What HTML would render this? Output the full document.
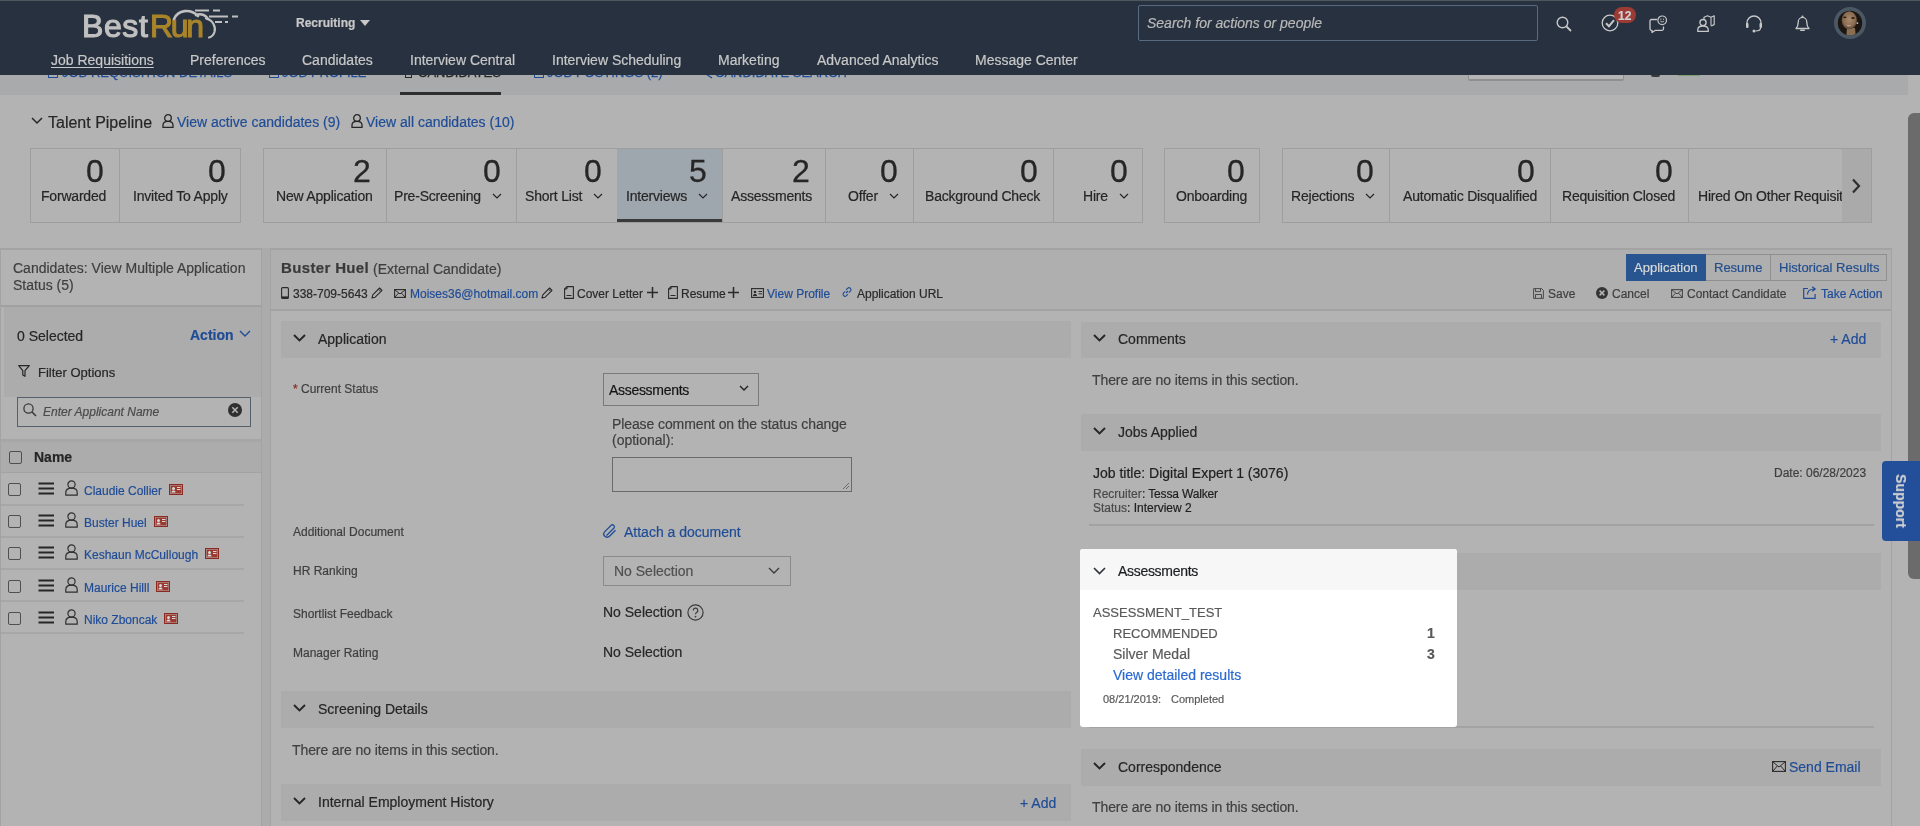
<!DOCTYPE html>
<html><head><meta charset="utf-8"><title>Recruiting</title>
<style>
html,body{margin:0;padding:0;}
body{width:1920px;height:826px;overflow:hidden;position:relative;background:#b3b3b3;font-family:"Liberation Sans",sans-serif;}
.t{position:absolute;white-space:nowrap;line-height:1;will-change:transform;-webkit-text-stroke:0.2px currentColor;}
.r{position:absolute;box-sizing:border-box;}
.i{position:absolute;overflow:visible;}
</style></head><body>
<div class="r" style="left:0px;top:75px;width:1908px;height:20px;background:#a9aaab"></div><div class="t" style="left:62px;top:66.00px;font-size:13px;color:#1f4c96;font-weight:400;font-style:normal;-webkit-text-stroke:0.25px #1f4c96">JOB REQUISITION DETAILS</div><div class="r" style="left:48px;top:70px;width:10px;height:8px;border:1px solid #1f4c96;border-top:none"></div><div class="t" style="left:282px;top:66.00px;font-size:13px;color:#1f4c96;font-weight:400;font-style:normal;-webkit-text-stroke:0.25px #1f4c96">JOB PROFILE</div><div class="r" style="left:269px;top:70px;width:10px;height:8px;border:1px solid #1f4c96;border-top:none"></div><div class="t" style="left:418px;top:66.00px;font-size:13px;color:#262626;font-weight:400;font-style:normal;-webkit-text-stroke:0.25px #262626">CANDIDATES</div><div class="r" style="left:405px;top:70px;width:7px;height:8px;border:1px solid #262626;border-top:none"></div><div class="t" style="left:547px;top:66.00px;font-size:13px;color:#1f4c96;font-weight:400;font-style:normal;-webkit-text-stroke:0.25px #1f4c96">JOB POSTINGS (2)</div><div class="r" style="left:534px;top:70px;width:10px;height:8px;border:1px solid #1f4c96;border-top:none"></div><div class="t" style="left:715px;top:66.00px;font-size:13px;color:#1f4c96;font-weight:400;font-style:normal;-webkit-text-stroke:0.25px #1f4c96">CANDIDATE SEARCH</div><svg class="i" style="left:705px;top:74px;" width="8" height="5" viewBox="0 0 8 5"><path d="M1 0l6 4" stroke="#1f4c96" stroke-width="1.3"/></svg><div class="r" style="left:400px;top:92px;width:101px;height:2.5px;background:#2e2e2e"></div><div class="r" style="left:1468px;top:74px;width:156px;height:7px;border:1px solid #8f8f8f;border-bottom-width:2px;border-top:none;border-radius:0 0 2px 2px;background:#b5b5b5"></div><div class="r" style="left:1651px;top:75px;width:9px;height:2px;background:#3a3a3a;border-radius:0 0 3px 3px"></div><div class="r" style="left:1678px;top:75px;width:22px;height:1px;background:#7fa070"></div><div class="r" style="left:0px;top:0px;width:1920px;height:75px;background:#27313f"></div><div class="r" style="left:0px;top:0px;width:1920px;height:1px;background:#4d575d"></div><div class="t" style="left:82px;top:9.91px;font-size:32px;color:#c0c0c0;font-weight:400;font-style:normal;-webkit-text-stroke:1.1px #c0c0c0;letter-spacing:0.6px">Best</div><div class="t" style="left:150px;top:9.91px;font-size:32px;color:#a8842a;font-weight:400;font-style:normal;-webkit-text-stroke:1.1px #a8842a;letter-spacing:-2.3px">Run</div><svg class="i" style="left:170px;top:5px;" width="72" height="36" viewBox="0 0 72 36"><path d="M4 14 C8 5 20 3 28 11" fill="none" stroke="#c0c0c0" stroke-width="2.6" stroke-linecap="round"/><path d="M26 10 C31 8 36 10 38 14" fill="none" stroke="#c0c0c0" stroke-width="2.6" stroke-linecap="round"/><path d="M36 13.5 C43 15 46 22 44.5 27 C43.5 30 41 32 39 32.5" fill="none" stroke="#c0c0c0" stroke-width="2.2" stroke-linecap="round"/><path d="M25 5.5h14M43 5.5h7M39 11.5h19M62 11.5h6M45 17h7M55 17h3" stroke="#c0c0c0" stroke-width="1.9"/></svg><div class="t" style="left:296px;top:16.84px;font-size:12px;color:#c8c8c8;font-weight:700;font-style:normal;">Recruiting</div><svg class="i" style="left:360px;top:20px;" width="10" height="6" viewBox="0 0 10 6"><path d="M0 0h10L5 6z" fill="#c8c8c8"/></svg><div class="t" style="left:51px;top:53.15px;font-size:14px;color:#c8c8c8;font-weight:400;font-style:normal;text-decoration:underline;text-underline-offset:2px">Job Requisitions</div><div class="t" style="left:190px;top:53.15px;font-size:14px;color:#c8c8c8;font-weight:400;font-style:normal;">Preferences</div><div class="t" style="left:302px;top:53.15px;font-size:14px;color:#c8c8c8;font-weight:400;font-style:normal;">Candidates</div><div class="t" style="left:410px;top:53.15px;font-size:14px;color:#c8c8c8;font-weight:400;font-style:normal;">Interview Central</div><div class="t" style="left:552px;top:53.15px;font-size:14px;color:#c8c8c8;font-weight:400;font-style:normal;">Interview Scheduling</div><div class="t" style="left:718px;top:53.15px;font-size:14px;color:#c8c8c8;font-weight:400;font-style:normal;">Marketing</div><div class="t" style="left:817px;top:53.15px;font-size:14px;color:#c8c8c8;font-weight:400;font-style:normal;">Advanced Analytics</div><div class="t" style="left:975px;top:53.15px;font-size:14px;color:#c8c8c8;font-weight:400;font-style:normal;">Message Center</div><div class="r" style="left:1138px;top:5px;width:400px;height:36px;border:1px solid #5a6a82;border-radius:2px"></div><div class="t" style="left:1147px;top:16.15px;font-size:14px;color:#b8b8b8;font-weight:400;font-style:italic;">Search for actions or people</div><svg class="i" style="left:1556px;top:16px;" width="16" height="16" viewBox="0 0 16 16"><circle cx="6.5" cy="6.5" r="5.3" fill="none" stroke="#c8c8c8" stroke-width="1.4"/><path d="M10.5 10.5L15 15" stroke="#c8c8c8" stroke-width="1.8"/></svg><svg class="i" style="left:1601px;top:14px;" width="18" height="18" viewBox="0 0 18 18"><circle cx="9" cy="9" r="7.8" fill="none" stroke="#c8c8c8" stroke-width="1.3"/><path d="M5 9.2l3 3 5-6" fill="none" stroke="#c8c8c8" stroke-width="2"/></svg><div class="r" style="left:1614px;top:7px;width:22px;height:16px;background:#9c3a34;border-radius:8px"></div><div class="t" style="left:1618px;top:9.84px;font-size:12px;color:#d0d3d5;font-weight:700;font-style:normal;">12</div><svg class="i" style="left:1649px;top:15px;" width="19" height="18" viewBox="0 0 19 18"><path d="M2.5 4.5h5.5M14.5 11.5v2.3c0 .9-.6 1.5-1.5 1.5H6.5L3 17.5v-2.2H2.5c-.9 0-1.5-.6-1.5-1.5V6c0-.9.6-1.5 1.5-1.5" fill="none" stroke="#c8c8c8" stroke-width="1.3" stroke-linejoin="round"/><circle cx="13.2" cy="5.3" r="4.3" fill="#27313f" stroke="#c8c8c8" stroke-width="1.2"/><path d="M11.3 6c.8 1.2 3 1.2 3.8 0" fill="none" stroke="#c8c8c8" stroke-width="1"/><circle cx="11.9" cy="4.2" r=".6" fill="#c8c8c8"/><circle cx="14.5" cy="4.2" r=".6" fill="#c8c8c8"/></svg><svg class="i" style="left:1697px;top:15px;" width="18" height="17" viewBox="0 0 18 17"><path d="M7 5.5V2.2l3.5-1.4 3.5 1.4 3.2-1.4v8.8L14 11" fill="none" stroke="#c8c8c8" stroke-width="1.2" stroke-linejoin="round"/><path d="M14 2.2v8.6" stroke="#c8c8c8" stroke-width="1.1"/><circle cx="6" cy="7.6" r="3.1" fill="#27313f" stroke="#c8c8c8" stroke-width="1.3"/><path d="M0.8 16.4v-1.8c0-2.4 2-3.6 5.2-3.6s5.2 1.2 5.2 3.6v1.8z" fill="#27313f" stroke="#c8c8c8" stroke-width="1.3"/></svg><svg class="i" style="left:1745px;top:15px;" width="18" height="17" viewBox="0 0 18 17"><path d="M2 11V8a7 7 0 0 1 14 0v3" fill="none" stroke="#c8c8c8" stroke-width="1.4"/><rect x="1" y="8" width="2.5" height="5" rx="1" fill="#c8c8c8"/><rect x="14.5" y="8" width="2.5" height="5" rx="1" fill="#c8c8c8"/><path d="M15.5 13c0 2-2 3-5 3" fill="none" stroke="#c8c8c8" stroke-width="1.2"/><circle cx="9" cy="16" r="1.5" fill="#c8c8c8"/></svg><svg class="i" style="left:1795px;top:15px;" width="15" height="17" viewBox="0 0 15 17"><path d="M1 13.5c1.8-1.6 2.2-3.6 2.2-6.3 0-2.6 1.9-4.8 4.3-4.8s4.3 2.2 4.3 4.8c0 2.7.4 4.7 2.2 6.3z" fill="none" stroke="#c8c8c8" stroke-width="1.3" stroke-linejoin="round"/><circle cx="7.5" cy="1.6" r="1" fill="#c8c8c8"/><path d="M5.8 15.3h3.4" stroke="#c8c8c8" stroke-width="1.6" stroke-linecap="round"/></svg><svg class="i" style="left:1834px;top:7px;" width="32" height="32" viewBox="0 0 32 32"><defs><clipPath id="av"><circle cx="16" cy="16" r="12.2"/></clipPath><radialGradient id="fc" cx="50%" cy="45%" r="55%"><stop offset="0" stop-color="#a88a6c"/><stop offset="0.7" stop-color="#8a6d52"/><stop offset="1" stop-color="#5a4534"/></radialGradient></defs><circle cx="16" cy="16" r="14" fill="none" stroke="#4b5864" stroke-width="4"/><g clip-path="url(#av)"><rect x="0" y="0" width="32" height="32" fill="#1c1612"/><path d="M12 32 L13 21 L21 21 L22 32z" fill="#8a6e52"/><ellipse cx="15.3" cy="13.3" rx="7.6" ry="9" fill="url(#fc)"/><ellipse cx="10.8" cy="10.3" rx="1.7" ry=".9" fill="#2a2018"/><ellipse cx="19" cy="11" rx="1.7" ry=".9" fill="#2a2018"/><path d="M12 17.3 Q14.8 19.8 17.6 17.5 Q14.8 21 12 17.3z" fill="#d8d0c8"/><circle cx="23.4" cy="16.1" r=".9" fill="#d0d0d0"/></g></svg><svg class="i" style="left:31px;top:117px;" width="12" height="8" viewBox="0 0 12 8"><path d="M1 1l5 5 5-5" fill="none" stroke="#262626" stroke-width="1.5"/></svg><div class="t" style="left:48px;top:115.46px;font-size:16px;color:#262626;font-weight:400;font-style:normal;">Talent Pipeline</div><svg class="i" style="left:162px;top:114px;" width="12" height="14" viewBox="0 0 12 14"><circle cx="6" cy="4" r="3.3" fill="none" stroke="#262626" stroke-width="1.3"/><path d="M1 13.3v-2.3c0-2.5 2.2-3.6 5-3.6s5 1.1 5 3.6v2.3z" fill="none" stroke="#262626" stroke-width="1.3"/></svg><div class="t" style="left:177px;top:115.15px;font-size:14px;color:#1f4c96;font-weight:400;font-style:normal;">View active candidates (9)</div><svg class="i" style="left:351px;top:114px;" width="12" height="14" viewBox="0 0 12 14"><circle cx="6" cy="4" r="3.3" fill="none" stroke="#262626" stroke-width="1.3"/><path d="M1 13.3v-2.3c0-2.5 2.2-3.6 5-3.6s5 1.1 5 3.6v2.3z" fill="none" stroke="#262626" stroke-width="1.3"/></svg><div class="t" style="left:366px;top:115.15px;font-size:14px;color:#1f4c96;font-weight:400;font-style:normal;">View all candidates (10)</div><div class="r" style="left:30px;top:148px;width:211px;height:75px;border:1px solid #9e9e9e"></div><div class="t" style="right:1816.5px;top:154.91px;font-size:32px;color:#262626;font-weight:400;font-style:normal;-webkit-text-stroke:0.3px #262626">0</div><div class="t" style="right:1814px;top:189.15px;font-size:14px;color:#262626;font-weight:400;font-style:normal;letter-spacing:-0.2px">Forwarded</div><div class="r" style="left:119px;top:149px;width:1px;height:73px;background:#9e9e9e"></div><div class="t" style="right:1694.5px;top:154.91px;font-size:32px;color:#262626;font-weight:400;font-style:normal;-webkit-text-stroke:0.3px #262626">0</div><div class="t" style="right:1692px;top:189.15px;font-size:14px;color:#262626;font-weight:400;font-style:normal;letter-spacing:-0.2px">Invited To Apply</div><div class="r" style="left:263px;top:148px;width:880px;height:75px;border:1px solid #9e9e9e"></div><div class="t" style="right:1549.5px;top:154.91px;font-size:32px;color:#262626;font-weight:400;font-style:normal;-webkit-text-stroke:0.3px #262626">2</div><div class="t" style="right:1547px;top:189.15px;font-size:14px;color:#262626;font-weight:400;font-style:normal;letter-spacing:-0.2px">New Application</div><div class="r" style="left:386px;top:149px;width:1px;height:73px;background:#9e9e9e"></div><div class="t" style="right:1419.5px;top:154.91px;font-size:32px;color:#262626;font-weight:400;font-style:normal;-webkit-text-stroke:0.3px #262626">0</div><svg class="i" style="left:492px;top:193px;" width="10" height="6" viewBox="0 0 10 6"><path d="M1 1l4 4 4-4" fill="none" stroke="#262626" stroke-width="1.2"/></svg><div class="t" style="right:1439px;top:189.15px;font-size:14px;color:#262626;font-weight:400;font-style:normal;letter-spacing:-0.2px">Pre-Screening</div><div class="r" style="left:516px;top:149px;width:1px;height:73px;background:#9e9e9e"></div><div class="t" style="right:1318.5px;top:154.91px;font-size:32px;color:#262626;font-weight:400;font-style:normal;-webkit-text-stroke:0.3px #262626">0</div><svg class="i" style="left:593px;top:193px;" width="10" height="6" viewBox="0 0 10 6"><path d="M1 1l4 4 4-4" fill="none" stroke="#262626" stroke-width="1.2"/></svg><div class="t" style="right:1338px;top:189.15px;font-size:14px;color:#262626;font-weight:400;font-style:normal;letter-spacing:-0.2px">Short List</div><div class="r" style="left:617px;top:149px;width:1px;height:73px;background:#9e9e9e"></div><div class="r" style="left:617px;top:149px;width:105px;height:73px;background:#9fa7ae"></div><div class="r" style="left:617px;top:219px;width:105px;height:3px;background:#3a3a3a"></div><div class="t" style="right:1213.5px;top:154.91px;font-size:32px;color:#262626;font-weight:400;font-style:normal;-webkit-text-stroke:0.3px #262626">5</div><svg class="i" style="left:698px;top:193px;" width="10" height="6" viewBox="0 0 10 6"><path d="M1 1l4 4 4-4" fill="none" stroke="#262626" stroke-width="1.2"/></svg><div class="t" style="right:1233px;top:189.15px;font-size:14px;color:#262626;font-weight:400;font-style:normal;letter-spacing:-0.2px">Interviews</div><div class="r" style="left:722px;top:149px;width:1px;height:73px;background:#9e9e9e"></div><div class="t" style="right:1110.5px;top:154.91px;font-size:32px;color:#262626;font-weight:400;font-style:normal;-webkit-text-stroke:0.3px #262626">2</div><div class="t" style="right:1108px;top:189.15px;font-size:14px;color:#262626;font-weight:400;font-style:normal;letter-spacing:-0.2px">Assessments</div><div class="r" style="left:825px;top:149px;width:1px;height:73px;background:#9e9e9e"></div><div class="t" style="right:1022.5px;top:154.91px;font-size:32px;color:#262626;font-weight:400;font-style:normal;-webkit-text-stroke:0.3px #262626">0</div><svg class="i" style="left:889px;top:193px;" width="10" height="6" viewBox="0 0 10 6"><path d="M1 1l4 4 4-4" fill="none" stroke="#262626" stroke-width="1.2"/></svg><div class="t" style="right:1042px;top:189.15px;font-size:14px;color:#262626;font-weight:400;font-style:normal;letter-spacing:-0.2px">Offer</div><div class="r" style="left:913px;top:149px;width:1px;height:73px;background:#9e9e9e"></div><div class="t" style="right:882.5px;top:154.91px;font-size:32px;color:#262626;font-weight:400;font-style:normal;-webkit-text-stroke:0.3px #262626">0</div><div class="t" style="right:880px;top:189.15px;font-size:14px;color:#262626;font-weight:400;font-style:normal;letter-spacing:-0.2px">Background Check</div><div class="r" style="left:1053px;top:149px;width:1px;height:73px;background:#9e9e9e"></div><div class="t" style="right:792.5px;top:154.91px;font-size:32px;color:#262626;font-weight:400;font-style:normal;-webkit-text-stroke:0.3px #262626">0</div><svg class="i" style="left:1119px;top:193px;" width="10" height="6" viewBox="0 0 10 6"><path d="M1 1l4 4 4-4" fill="none" stroke="#262626" stroke-width="1.2"/></svg><div class="t" style="right:812px;top:189.15px;font-size:14px;color:#262626;font-weight:400;font-style:normal;letter-spacing:-0.2px">Hire</div><div class="r" style="left:1164px;top:148px;width:96px;height:75px;border:1px solid #9e9e9e"></div><div class="t" style="right:675.5px;top:154.91px;font-size:32px;color:#262626;font-weight:400;font-style:normal;-webkit-text-stroke:0.3px #262626">0</div><div class="t" style="right:673px;top:189.15px;font-size:14px;color:#262626;font-weight:400;font-style:normal;letter-spacing:-0.2px">Onboarding</div><div class="r" style="left:1282px;top:148px;width:590px;height:75px;border:1px solid #9e9e9e"></div><div class="t" style="right:546.5px;top:154.91px;font-size:32px;color:#262626;font-weight:400;font-style:normal;-webkit-text-stroke:0.3px #262626">0</div><svg class="i" style="left:1365px;top:193px;" width="10" height="6" viewBox="0 0 10 6"><path d="M1 1l4 4 4-4" fill="none" stroke="#262626" stroke-width="1.2"/></svg><div class="t" style="right:566px;top:189.15px;font-size:14px;color:#262626;font-weight:400;font-style:normal;letter-spacing:-0.2px">Rejections</div><div class="r" style="left:1389px;top:149px;width:1px;height:73px;background:#9e9e9e"></div><div class="t" style="right:385.5px;top:154.91px;font-size:32px;color:#262626;font-weight:400;font-style:normal;-webkit-text-stroke:0.3px #262626">0</div><div class="t" style="right:383px;top:189.15px;font-size:14px;color:#262626;font-weight:400;font-style:normal;letter-spacing:-0.2px">Automatic Disqualified</div><div class="r" style="left:1550px;top:149px;width:1px;height:73px;background:#9e9e9e"></div><div class="t" style="right:247.5px;top:154.91px;font-size:32px;color:#262626;font-weight:400;font-style:normal;-webkit-text-stroke:0.3px #262626">0</div><div class="t" style="right:245px;top:189.15px;font-size:14px;color:#262626;font-weight:400;font-style:normal;letter-spacing:-0.2px">Requisition Closed</div><div class="r" style="left:1688px;top:149px;width:1px;height:73px;background:#9e9e9e"></div><div class="r" style="left:1689px;top:149px;width:153px;height:73px;overflow:hidden"><div class="t" style="left:9px;top:40.15px;font-size:14px;color:#262626;font-weight:400;font-style:normal;letter-spacing:-0.2px">Hired On Other Requisition</div></div><div class="r" style="left:1842px;top:149px;width:29px;height:73px;background:#aaaaaa"></div><svg class="i" style="left:1851px;top:178px;" width="10" height="16" viewBox="0 0 10 16"><path d="M2 1.5l6 6.5-6 6.5" fill="none" stroke="#2e2e2e" stroke-width="2.2"/></svg><div class="r" style="left:1908px;top:113px;width:12px;height:466px;background:#6b6b6b;border-radius:6px 0 0 6px"></div><div class="r" style="left:0px;top:248px;width:262px;height:578px;border-left:1px solid #a3a3a3;border-top:2px solid #a3a3a3;border-right:1px solid #a3a3a3"></div><div class="r" style="left:262px;top:248px;width:8px;height:578px;background:#ababab"></div><div class="t" style="left:13px;top:261.15px;font-size:14px;color:#3f3f3f;font-weight:400;font-style:normal;">Candidates: View Multiple Application</div><div class="t" style="left:13px;top:278.15px;font-size:14px;color:#3f3f3f;font-weight:400;font-style:normal;">Status (5)</div><div class="r" style="left:1px;top:305px;width:260px;height:2px;background:#a0a0a0"></div><div class="r" style="left:4px;top:307px;width:257px;height:90px;background:#acacac"></div><div class="t" style="left:17px;top:329.15px;font-size:14px;color:#262626;font-weight:400;font-style:normal;">0 Selected</div><div class="t" style="left:190px;top:328.15px;font-size:14px;color:#1f4c96;font-weight:700;font-style:normal;">Action</div><svg class="i" style="left:239px;top:330px;" width="12" height="8" viewBox="0 0 12 8"><path d="M1 1l5 5 5-5" fill="none" stroke="#1f4c96" stroke-width="1.4"/></svg><svg class="i" style="left:18px;top:365px;" width="12" height="12" viewBox="0 0 12 12"><path d="M0.7 0.7h10.6L7 5.7v5.6l-2.2-1.4V5.7z" fill="none" stroke="#262626" stroke-width="1.2" stroke-linejoin="round"/></svg><div class="t" style="left:38px;top:366.00px;font-size:13px;color:#262626;font-weight:400;font-style:normal;">Filter Options</div><div class="r" style="left:17px;top:397px;width:234px;height:30px;border:1px solid #56606c;background:#b3b3b3"></div><svg class="i" style="left:23px;top:403px;" width="14" height="14" viewBox="0 0 14 14"><circle cx="5.5" cy="5.5" r="4.6" fill="none" stroke="#3a3a3a" stroke-width="1.3"/><path d="M9 9l4 4" stroke="#3a3a3a" stroke-width="1.6"/></svg><div class="t" style="left:43px;top:405.84px;font-size:12px;color:#4a4a4a;font-weight:400;font-style:italic;">Enter Applicant Name</div><svg class="i" style="left:228px;top:403px;" width="14" height="14" viewBox="0 0 14 14"><circle cx="7" cy="7" r="7" fill="#2f2f2f"/><path d="M4.3 4.3l5.4 5.4M9.7 4.3l-5.4 5.4" stroke="#b3b3b3" stroke-width="1.6"/></svg><div class="r" style="left:1px;top:439px;width:260px;height:3px;background:#a6a6a6"></div><div class="r" style="left:1px;top:442px;width:260px;height:30px;background:#acacac"></div><div class="r" style="left:9px;top:451px;width:13px;height:13px;border:1px solid #4f4f4f;border-radius:2px"></div><div class="t" style="left:34px;top:450.15px;font-size:14px;color:#262626;font-weight:700;font-style:normal;">Name</div><div class="r" style="left:1px;top:472px;width:260px;height:1px;background:#a3a3a3"></div><div class="r" style="left:8px;top:483px;width:13px;height:13px;border:1px solid #4f4f4f;border-radius:2px"></div><svg class="i" style="left:38px;top:482px;" width="16" height="13" viewBox="0 0 16 13"><path d="M0.5 1.5h15.5M0.5 6.5h15.5M0.5 11.5h15.5" stroke="#262626" stroke-width="2.1"/></svg><svg class="i" style="left:65px;top:480px;" width="13" height="16" viewBox="0 0 13 16"><circle cx="6.5" cy="4.5" r="3.6" fill="none" stroke="#2f2f2f" stroke-width="1.2"/><path d="M0.8 15.2v-2.8c0-2.8 2.4-4.2 5.7-4.2s5.7 1.4 5.7 4.2v2.8z" fill="none" stroke="#2f2f2f" stroke-width="1.2"/></svg><div class="t" style="left:84px;top:484.84px;font-size:12px;color:#1f4c96;font-weight:400;font-style:normal;">Claudie Collier</div><svg class="i" style="left:169px;top:484px;" width="14" height="11" viewBox="0 0 14 11"><rect x="0.5" y="0.5" width="13" height="10" fill="none" stroke="#8b2a22" stroke-width="1"/><rect x="1.5" y="1.5" width="11" height="8" fill="#9b3a30"/><circle cx="4.5" cy="4.5" r="1.5" fill="#d8d8d8"/><path d="M2.5 8.5c0-1.5 1-2 2-2s2 .5 2 2z" fill="#d8d8d8"/><path d="M8 3.5h3.5M8 5.5h3.5" stroke="#d8d8d8" stroke-width="1"/></svg><div class="r" style="left:1px;top:504px;width:243px;height:2px;background:#a7a7a7"></div><div class="r" style="left:8px;top:515px;width:13px;height:13px;border:1px solid #4f4f4f;border-radius:2px"></div><svg class="i" style="left:38px;top:514px;" width="16" height="13" viewBox="0 0 16 13"><path d="M0.5 1.5h15.5M0.5 6.5h15.5M0.5 11.5h15.5" stroke="#262626" stroke-width="2.1"/></svg><svg class="i" style="left:65px;top:512px;" width="13" height="16" viewBox="0 0 13 16"><circle cx="6.5" cy="4.5" r="3.6" fill="none" stroke="#2f2f2f" stroke-width="1.2"/><path d="M0.8 15.2v-2.8c0-2.8 2.4-4.2 5.7-4.2s5.7 1.4 5.7 4.2v2.8z" fill="none" stroke="#2f2f2f" stroke-width="1.2"/></svg><div class="t" style="left:84px;top:516.84px;font-size:12px;color:#1f4c96;font-weight:400;font-style:normal;">Buster Huel</div><svg class="i" style="left:154px;top:516px;" width="14" height="11" viewBox="0 0 14 11"><rect x="0.5" y="0.5" width="13" height="10" fill="none" stroke="#8b2a22" stroke-width="1"/><rect x="1.5" y="1.5" width="11" height="8" fill="#9b3a30"/><circle cx="4.5" cy="4.5" r="1.5" fill="#d8d8d8"/><path d="M2.5 8.5c0-1.5 1-2 2-2s2 .5 2 2z" fill="#d8d8d8"/><path d="M8 3.5h3.5M8 5.5h3.5" stroke="#d8d8d8" stroke-width="1"/></svg><div class="r" style="left:1px;top:536px;width:243px;height:2px;background:#a7a7a7"></div><div class="r" style="left:8px;top:547px;width:13px;height:13px;border:1px solid #4f4f4f;border-radius:2px"></div><svg class="i" style="left:38px;top:546px;" width="16" height="13" viewBox="0 0 16 13"><path d="M0.5 1.5h15.5M0.5 6.5h15.5M0.5 11.5h15.5" stroke="#262626" stroke-width="2.1"/></svg><svg class="i" style="left:65px;top:544px;" width="13" height="16" viewBox="0 0 13 16"><circle cx="6.5" cy="4.5" r="3.6" fill="none" stroke="#2f2f2f" stroke-width="1.2"/><path d="M0.8 15.2v-2.8c0-2.8 2.4-4.2 5.7-4.2s5.7 1.4 5.7 4.2v2.8z" fill="none" stroke="#2f2f2f" stroke-width="1.2"/></svg><div class="t" style="left:84px;top:548.84px;font-size:12px;color:#1f4c96;font-weight:400;font-style:normal;">Keshaun McCullough</div><svg class="i" style="left:205px;top:548px;" width="14" height="11" viewBox="0 0 14 11"><rect x="0.5" y="0.5" width="13" height="10" fill="none" stroke="#8b2a22" stroke-width="1"/><rect x="1.5" y="1.5" width="11" height="8" fill="#9b3a30"/><circle cx="4.5" cy="4.5" r="1.5" fill="#d8d8d8"/><path d="M2.5 8.5c0-1.5 1-2 2-2s2 .5 2 2z" fill="#d8d8d8"/><path d="M8 3.5h3.5M8 5.5h3.5" stroke="#d8d8d8" stroke-width="1"/></svg><div class="r" style="left:1px;top:568px;width:243px;height:2px;background:#a7a7a7"></div><div class="r" style="left:8px;top:580px;width:13px;height:13px;border:1px solid #4f4f4f;border-radius:2px"></div><svg class="i" style="left:38px;top:579px;" width="16" height="13" viewBox="0 0 16 13"><path d="M0.5 1.5h15.5M0.5 6.5h15.5M0.5 11.5h15.5" stroke="#262626" stroke-width="2.1"/></svg><svg class="i" style="left:65px;top:577px;" width="13" height="16" viewBox="0 0 13 16"><circle cx="6.5" cy="4.5" r="3.6" fill="none" stroke="#2f2f2f" stroke-width="1.2"/><path d="M0.8 15.2v-2.8c0-2.8 2.4-4.2 5.7-4.2s5.7 1.4 5.7 4.2v2.8z" fill="none" stroke="#2f2f2f" stroke-width="1.2"/></svg><div class="t" style="left:84px;top:581.84px;font-size:12px;color:#1f4c96;font-weight:400;font-style:normal;">Maurice Hilll</div><svg class="i" style="left:156px;top:581px;" width="14" height="11" viewBox="0 0 14 11"><rect x="0.5" y="0.5" width="13" height="10" fill="none" stroke="#8b2a22" stroke-width="1"/><rect x="1.5" y="1.5" width="11" height="8" fill="#9b3a30"/><circle cx="4.5" cy="4.5" r="1.5" fill="#d8d8d8"/><path d="M2.5 8.5c0-1.5 1-2 2-2s2 .5 2 2z" fill="#d8d8d8"/><path d="M8 3.5h3.5M8 5.5h3.5" stroke="#d8d8d8" stroke-width="1"/></svg><div class="r" style="left:1px;top:600px;width:243px;height:2px;background:#a7a7a7"></div><div class="r" style="left:8px;top:612px;width:13px;height:13px;border:1px solid #4f4f4f;border-radius:2px"></div><svg class="i" style="left:38px;top:611px;" width="16" height="13" viewBox="0 0 16 13"><path d="M0.5 1.5h15.5M0.5 6.5h15.5M0.5 11.5h15.5" stroke="#262626" stroke-width="2.1"/></svg><svg class="i" style="left:65px;top:609px;" width="13" height="16" viewBox="0 0 13 16"><circle cx="6.5" cy="4.5" r="3.6" fill="none" stroke="#2f2f2f" stroke-width="1.2"/><path d="M0.8 15.2v-2.8c0-2.8 2.4-4.2 5.7-4.2s5.7 1.4 5.7 4.2v2.8z" fill="none" stroke="#2f2f2f" stroke-width="1.2"/></svg><div class="t" style="left:84px;top:613.84px;font-size:12px;color:#1f4c96;font-weight:400;font-style:normal;">Niko Zboncak</div><svg class="i" style="left:164px;top:613px;" width="14" height="11" viewBox="0 0 14 11"><rect x="0.5" y="0.5" width="13" height="10" fill="none" stroke="#8b2a22" stroke-width="1"/><rect x="1.5" y="1.5" width="11" height="8" fill="#9b3a30"/><circle cx="4.5" cy="4.5" r="1.5" fill="#d8d8d8"/><path d="M2.5 8.5c0-1.5 1-2 2-2s2 .5 2 2z" fill="#d8d8d8"/><path d="M8 3.5h3.5M8 5.5h3.5" stroke="#d8d8d8" stroke-width="1"/></svg><div class="r" style="left:1px;top:632px;width:243px;height:2px;background:#a7a7a7"></div><div class="r" style="left:270px;top:248px;width:1622px;height:578px;border-left:1px solid #a3a3a3;border-top:2px solid #a3a3a3;border-right:1px solid #a3a3a3"></div><div class="r" style="left:271px;top:250px;width:1620px;height:59px;background:#afafaf"></div><div class="r" style="left:271px;top:309px;width:1620px;height:2px;background:#a3a3a3"></div><div class="t" style="left:281px;top:260.30px;font-size:15px;color:#3a3a3a;font-weight:700;font-style:normal;letter-spacing:0.35px">Buster Huel</div><div class="t" style="left:373px;top:262.15px;font-size:14px;color:#3f3f3f;font-weight:400;font-style:normal;">(External Candidate)</div><svg class="i" style="left:281px;top:287px;" width="8" height="12" viewBox="0 0 8 12"><rect x="0.6" y="0.6" width="6.8" height="10.8" rx="1" fill="none" stroke="#2a2a2a" stroke-width="1.1"/><path d="M0.8 10.2h6.4" stroke="#2a2a2a" stroke-width="1.6"/></svg><div class="t" style="left:293px;top:287.84px;font-size:12px;color:#2a2a2a;font-weight:400;font-style:normal;">338-709-5643</div><svg class="i" style="left:371px;top:287px;" width="12" height="12" viewBox="0 0 12 12"><path d="M1 11l.8-3.2L8.6 1l2.4 2.4-6.8 6.8z" fill="none" stroke="#2a2a2a" stroke-width="1.1" stroke-linejoin="round"/><path d="M7.5 2.2l2.3 2.3" stroke="#2a2a2a" stroke-width="1"/></svg><svg class="i" style="left:394px;top:289px;" width="12" height="9" viewBox="0 0 12 9"><rect x="0.6" y="0.6" width="10.8" height="7.8" fill="none" stroke="#2a2a2a" stroke-width="1.1"/><path d="M0.8 0.8L6.0 4.95L11.2 0.8M0.8 8.2L4.5600000000000005 4.05M11.2 8.2L7.4399999999999995 4.05" fill="none" stroke="#2a2a2a" stroke-width="1"/></svg><div class="t" style="left:410px;top:287.84px;font-size:12px;color:#1f4c96;font-weight:400;font-style:normal;">Moises36@hotmail.com</div><svg class="i" style="left:541px;top:287px;" width="12" height="12" viewBox="0 0 12 12"><path d="M1 11l.8-3.2L8.6 1l2.4 2.4-6.8 6.8z" fill="none" stroke="#2a2a2a" stroke-width="1.1" stroke-linejoin="round"/><path d="M7.5 2.2l2.3 2.3" stroke="#2a2a2a" stroke-width="1"/></svg><svg class="i" style="left:564px;top:286px;" width="10" height="13" viewBox="0 0 10 13"><path d="M3 0.6h6.4v11.8H0.6V3z" fill="none" stroke="#2a2a2a" stroke-width="1.1" stroke-linejoin="round"/><path d="M3 0.6V3H0.6" fill="none" stroke="#2a2a2a" stroke-width="1"/><path d="M2.5 9.5h5" stroke="#2a2a2a" stroke-width="1"/></svg><div class="t" style="left:577px;top:287.84px;font-size:12px;color:#2a2a2a;font-weight:400;font-style:normal;">Cover Letter</div><svg class="i" style="left:647px;top:287px;" width="11" height="11" viewBox="0 0 11 11"><path d="M5.5 0v11M0 5.5h11" stroke="#2a2a2a" stroke-width="1.5"/></svg><svg class="i" style="left:668px;top:286px;" width="10" height="13" viewBox="0 0 10 13"><path d="M3 0.6h6.4v11.8H0.6V3z" fill="none" stroke="#2a2a2a" stroke-width="1.1" stroke-linejoin="round"/><path d="M3 0.6V3H0.6" fill="none" stroke="#2a2a2a" stroke-width="1"/><path d="M2.5 9.5h5" stroke="#2a2a2a" stroke-width="1"/></svg><div class="t" style="left:681px;top:287.84px;font-size:12px;color:#2a2a2a;font-weight:400;font-style:normal;">Resume</div><svg class="i" style="left:728px;top:287px;" width="11" height="11" viewBox="0 0 11 11"><path d="M5.5 0v11M0 5.5h11" stroke="#2a2a2a" stroke-width="1.5"/></svg><svg class="i" style="left:751px;top:288px;" width="13" height="10" viewBox="0 0 13 10"><rect x="0.6" y="0.6" width="11.8" height="8.8" fill="none" stroke="#2a2a2a" stroke-width="1.1"/><circle cx="4" cy="4" r="1.3" fill="#2a2a2a"/><path d="M2 8c0-1.4.9-2 2-2s2 .6 2 2z" fill="#2a2a2a"/><path d="M7.5 3.5h3.5M7.5 5.8h3.5" stroke="#2a2a2a" stroke-width="1"/></svg><div class="t" style="left:767px;top:287.84px;font-size:12px;color:#1f4c96;font-weight:400;font-style:normal;">View Profile</div><svg class="i" style="left:841px;top:286px;" width="12" height="12" viewBox="0 0 12 12"><path d="M5 7l2-2M4.2 5.3L2.4 7.1a2 2 0 0 0 2.8 2.8L7 8.1M7.8 6.7l1.8-1.8A2 2 0 0 0 6.8 2.1L5 3.9" fill="none" stroke="#1f4c96" stroke-width="1.1"/></svg><div class="t" style="left:857px;top:287.84px;font-size:12px;color:#2a2a2a;font-weight:400;font-style:normal;">Application URL</div><div class="r" style="left:1626px;top:254px;width:80px;height:27px;background:#28558f;border:1px solid #28558f"></div><div class="t" style="left:1634px;top:261.00px;font-size:13px;color:#d9d9d9;font-weight:400;font-style:normal;">Application</div><div class="r" style="left:1706px;top:254px;width:181px;height:27px;border:1px solid #8f8f8f;border-left:none"></div><div class="r" style="left:1770px;top:254px;width:1px;height:27px;background:#8f8f8f"></div><div class="t" style="left:1714px;top:261.00px;font-size:13px;color:#234f8e;font-weight:400;font-style:normal;">Resume</div><div class="t" style="left:1779px;top:261.00px;font-size:13px;color:#234f8e;font-weight:400;font-style:normal;">Historical Results</div><svg class="i" style="left:1533px;top:288px;" width="11" height="11" viewBox="0 0 11 11"><path d="M0.6 0.6h8l1.8 1.8v8H0.6z" fill="none" stroke="#4a4a4a" stroke-width="1"/><path d="M2.5 0.6v3h5v-3M2.5 10.4V6.5h6v3.9" fill="none" stroke="#4a4a4a" stroke-width="1"/></svg><div class="t" style="left:1548px;top:288.34px;font-size:12px;color:#3f3f3f;font-weight:400;font-style:normal;">Save</div><svg class="i" style="left:1596px;top:287px;" width="12" height="12" viewBox="0 0 12 12"><circle cx="6" cy="6" r="6" fill="#353535"/><path d="M3.6 3.6l4.8 4.8M8.4 3.6l-4.8 4.8" stroke="#b3b3b3" stroke-width="1.5"/></svg><div class="t" style="left:1612px;top:288.34px;font-size:12px;color:#3f3f3f;font-weight:400;font-style:normal;">Cancel</div><svg class="i" style="left:1671px;top:289px;" width="12" height="9" viewBox="0 0 12 9"><rect x="0.6" y="0.6" width="10.8" height="7.8" fill="none" stroke="#4a4a4a" stroke-width="1.1"/><path d="M0.8 0.8L6.0 4.95L11.2 0.8M0.8 8.2L4.5600000000000005 4.05M11.2 8.2L7.4399999999999995 4.05" fill="none" stroke="#4a4a4a" stroke-width="1"/></svg><div class="t" style="left:1687px;top:288.34px;font-size:12px;color:#3f3f3f;font-weight:400;font-style:normal;">Contact Candidate</div><svg class="i" style="left:1803px;top:286px;" width="14" height="13" viewBox="0 0 14 13"><path d="M5 2.5H0.7v9.8h11.4V8" fill="none" stroke="#1f4c96" stroke-width="1.2"/><path d="M4.5 8.5c0-4 2.5-5.5 7-5.5M9.2 0.8l3 2.2-3 2.2" fill="none" stroke="#1f4c96" stroke-width="1.2"/></svg><div class="t" style="left:1821px;top:288.34px;font-size:12px;color:#1f4c96;font-weight:400;font-style:normal;">Take Action</div><div class="r" style="left:281px;top:321px;width:790px;height:37px;background:#acacac"></div><svg class="i" style="left:293px;top:334px;" width="13" height="8" viewBox="0 0 13 8"><path d="M1 1l5.5 5.5L12 1" fill="none" stroke="#262626" stroke-width="1.9"/></svg><div class="t" style="left:318px;top:332.15px;font-size:14px;color:#262626;font-weight:400;font-style:normal;">Application</div><div class="t" style="left:293px;top:382.84px;font-size:12px;color:#8a2a20;font-weight:400;font-style:normal;">*</div><div class="t" style="left:301px;top:382.84px;font-size:12px;color:#3f3f3f;font-weight:400;font-style:normal;">Current Status</div><div class="r" style="left:603px;top:373px;width:156px;height:33px;border:1px solid #7a7a7a"></div><div class="t" style="left:609px;top:383.15px;font-size:14px;color:#141414;font-weight:400;font-style:normal;letter-spacing:-0.3px">Assessments</div><svg class="i" style="left:739px;top:385px;" width="10" height="6" viewBox="0 0 10 6"><path d="M1 1l4 4 4-4" fill="none" stroke="#1f1f1f" stroke-width="1.3"/></svg><div class="t" style="left:612px;top:417.15px;font-size:14px;color:#3f3f3f;font-weight:400;font-style:normal;letter-spacing:-0.1px">Please comment on the status change</div><div class="t" style="left:612px;top:433.15px;font-size:14px;color:#3f3f3f;font-weight:400;font-style:normal;">(optional):</div><div class="r" style="left:612px;top:457px;width:240px;height:35px;border:1px solid #6a6a6a"></div><svg class="i" style="left:842px;top:482px;" width="8" height="8" viewBox="0 0 8 8"><path d="M7 1L1 7M7 4L4 7" stroke="#6a6a6a" stroke-width="1"/></svg><div class="t" style="left:293px;top:525.84px;font-size:12px;color:#3f3f3f;font-weight:400;font-style:normal;">Additional Document</div><svg class="i" style="left:603px;top:524px;" width="16" height="14" viewBox="0 0 16 14"><path d="M3.5 11.5L11 4a2 2 0 0 0-2.8-2.8L1.8 7.6a3.3 3.3 0 0 0 4.7 4.7L12.5 6.3" fill="none" stroke="#1f4c96" stroke-width="1.3"/></svg><div class="t" style="left:624px;top:525.15px;font-size:14px;color:#1f4c96;font-weight:400;font-style:normal;">Attach a document</div><div class="t" style="left:293px;top:564.84px;font-size:12px;color:#3f3f3f;font-weight:400;font-style:normal;">HR Ranking</div><div class="r" style="left:603px;top:556px;width:188px;height:30px;border:1px solid #8a8a8a"></div><div class="t" style="left:614px;top:564.15px;font-size:14px;color:#505050;font-weight:400;font-style:normal;">No Selection</div><svg class="i" style="left:768px;top:567px;" width="12" height="7" viewBox="0 0 12 7"><path d="M1 1l5 5 5-5" fill="none" stroke="#3a3a3a" stroke-width="1.3"/></svg><div class="t" style="left:293px;top:607.84px;font-size:12px;color:#3f3f3f;font-weight:400;font-style:normal;">Shortlist Feedback</div><div class="t" style="left:603px;top:605.15px;font-size:14px;color:#262626;font-weight:400;font-style:normal;">No Selection</div><svg class="i" style="left:687px;top:604px;" width="17" height="17" viewBox="0 0 17 17"><circle cx="8.5" cy="8.5" r="7.6" fill="none" stroke="#3a3a3a" stroke-width="1.2"/><path d="M6.2 6.5a2.3 2.3 0 1 1 3.3 2c-.8.4-1 .9-1 1.7" fill="none" stroke="#3a3a3a" stroke-width="1.2"/><circle cx="8.5" cy="12.6" r=".9" fill="#3a3a3a"/></svg><div class="t" style="left:293px;top:646.84px;font-size:12px;color:#3f3f3f;font-weight:400;font-style:normal;">Manager Rating</div><div class="t" style="left:603px;top:645.15px;font-size:14px;color:#262626;font-weight:400;font-style:normal;">No Selection</div><div class="r" style="left:281px;top:691px;width:790px;height:37px;background:#acacac"></div><svg class="i" style="left:293px;top:704px;" width="13" height="8" viewBox="0 0 13 8"><path d="M1 1l5.5 5.5L12 1" fill="none" stroke="#262626" stroke-width="1.9"/></svg><div class="t" style="left:318px;top:702.15px;font-size:14px;color:#262626;font-weight:400;font-style:normal;">Screening Details</div><div class="t" style="left:292px;top:743.15px;font-size:14px;color:#3f3f3f;font-weight:400;font-style:normal;letter-spacing:-0.1px">There are no items in this section.</div><div class="r" style="left:281px;top:784px;width:790px;height:37px;background:#acacac"></div><svg class="i" style="left:293px;top:797px;" width="13" height="8" viewBox="0 0 13 8"><path d="M1 1l5.5 5.5L12 1" fill="none" stroke="#262626" stroke-width="1.9"/></svg><div class="t" style="left:318px;top:795.15px;font-size:14px;color:#262626;font-weight:400;font-style:normal;">Internal Employment History</div><div class="t" style="left:1020px;top:796.15px;font-size:14px;color:#1f4c96;font-weight:400;font-style:normal;">+ Add</div><div class="r" style="left:1081px;top:322px;width:800px;height:36px;background:#acacac"></div><svg class="i" style="left:1093px;top:334px;" width="13" height="8" viewBox="0 0 13 8"><path d="M1 1l5.5 5.5L12 1" fill="none" stroke="#262626" stroke-width="1.9"/></svg><div class="t" style="left:1118px;top:332.15px;font-size:14px;color:#262626;font-weight:400;font-style:normal;">Comments</div><div class="t" style="left:1830px;top:332.15px;font-size:14px;color:#1f4c96;font-weight:400;font-style:normal;">+ Add</div><div class="t" style="left:1092px;top:373.15px;font-size:14px;color:#3f3f3f;font-weight:400;font-style:normal;letter-spacing:-0.1px">There are no items in this section.</div><div class="r" style="left:1081px;top:414px;width:800px;height:37px;background:#acacac"></div><svg class="i" style="left:1093px;top:427px;" width="13" height="8" viewBox="0 0 13 8"><path d="M1 1l5.5 5.5L12 1" fill="none" stroke="#262626" stroke-width="1.9"/></svg><div class="t" style="left:1118px;top:425.15px;font-size:14px;color:#262626;font-weight:400;font-style:normal;">Jobs Applied</div><div class="t" style="left:1093px;top:466.15px;font-size:14px;color:#1f1f1f;font-weight:400;font-style:normal;">Job title: Digital Expert 1 (3076)</div><div class="t" style="right:54px;top:466.84px;font-size:12px;color:#3f3f3f;font-weight:400;font-style:normal;">Date: 06/28/2023</div><div class="t" style="left:1093px;top:487.84px;font-size:12px;color:#4a4a4a;font-weight:400;font-style:normal;">Recruiter</div><div class="t" style="left:1141.6815625px;top:487.84px;font-size:12px;color:#1f1f1f;font-weight:400;font-style:normal;letter-spacing:-0.15px">: Tessa Walker</div><div class="t" style="left:1093px;top:501.84px;font-size:12px;color:#4a4a4a;font-weight:400;font-style:normal;">Status</div><div class="t" style="left:1127.02px;top:501.84px;font-size:12px;color:#1f1f1f;font-weight:400;font-style:normal;">: Interview 2</div><div class="r" style="left:1089px;top:524px;width:785px;height:1.5px;background:#a2a2a2"></div><div class="r" style="left:1081px;top:553px;width:800px;height:37px;background:#acacac"></div><svg class="i" style="left:1093px;top:566px;" width="13" height="8" viewBox="0 0 13 8"><path d="M1 1l5.5 5.5L12 1" fill="none" stroke="#262626" stroke-width="1.9"/></svg><div class="t" style="left:1118px;top:564.15px;font-size:14px;color:#262626;font-weight:400;font-style:normal;">Assessments</div><div class="r" style="left:1089px;top:726px;width:785px;height:2px;background:#a3a3a3"></div><div class="r" style="left:1081px;top:749px;width:800px;height:37px;background:#acacac"></div><svg class="i" style="left:1093px;top:762px;" width="13" height="8" viewBox="0 0 13 8"><path d="M1 1l5.5 5.5L12 1" fill="none" stroke="#262626" stroke-width="1.9"/></svg><div class="t" style="left:1118px;top:760.15px;font-size:14px;color:#262626;font-weight:400;font-style:normal;">Correspondence</div><svg class="i" style="left:1772px;top:761px;" width="14" height="11" viewBox="0 0 14 11"><rect x="0.6" y="0.6" width="12.8" height="9.8" fill="none" stroke="#2a2a2a" stroke-width="1.1"/><path d="M0.8 0.8L7.0 6.050000000000001L13.2 0.8M0.8 10.2L5.32 4.95M13.2 10.2L8.68 4.95" fill="none" stroke="#2a2a2a" stroke-width="1"/></svg><div class="t" style="left:1789px;top:760.15px;font-size:14px;color:#1f4c96;font-weight:400;font-style:normal;">Send Email</div><div class="t" style="left:1092px;top:800.15px;font-size:14px;color:#3f3f3f;font-weight:400;font-style:normal;letter-spacing:-0.1px">There are no items in this section.</div><div class="r" style="left:1882px;top:461px;width:38px;height:80px;background:#234f9a;border-radius:4px 0 0 4px"></div><div class="t" style="left:1901px;top:501px;font-size:14px;font-weight:700;color:#d0d0d0;transform:translate(-50%,-50%) rotate(90deg);">Support</div><div class="r" style="left:1080px;top:549px;width:377px;height:178px;background:#fff;border-radius:3px;overflow:hidden"></div><div class="r" style="left:1080px;top:549px;width:377px;height:41px;background:#f7f7f7;border-radius:3px 3px 0 0"></div><svg class="i" style="left:1093px;top:567px;" width="13" height="8" viewBox="0 0 13 8"><path d="M1 1l5.5 5.5L12 1" fill="none" stroke="#32363a" stroke-width="1.7"/></svg><div class="t" style="left:1118px;top:564.15px;font-size:14px;color:#1a1c1f;font-weight:400;font-style:normal;letter-spacing:-0.3px">Assessments</div><div class="t" style="left:1093px;top:606.00px;font-size:13px;color:#595959;font-weight:400;font-style:normal;">ASSESSMENT_TEST</div><div class="t" style="left:1113px;top:627.00px;font-size:13px;color:#595959;font-weight:400;font-style:normal;">RECOMMENDED</div><div class="t" style="right:485px;top:626.15px;font-size:14px;color:#595959;font-weight:700;font-style:normal;">1</div><div class="t" style="left:1113px;top:647.15px;font-size:14px;color:#595959;font-weight:400;font-style:normal;">Silver Medal</div><div class="t" style="right:485px;top:647.15px;font-size:14px;color:#595959;font-weight:700;font-style:normal;">3</div><div class="t" style="left:1113px;top:668.15px;font-size:14px;color:#2a6ad0;font-weight:400;font-style:normal;">View detailed results</div><div class="t" style="left:1103px;top:693.69px;font-size:11px;color:#595959;font-weight:400;font-style:normal;">08/21/2019:</div><div class="t" style="left:1171px;top:693.69px;font-size:11px;color:#595959;font-weight:400;font-style:normal;">Completed</div>
</body></html>
